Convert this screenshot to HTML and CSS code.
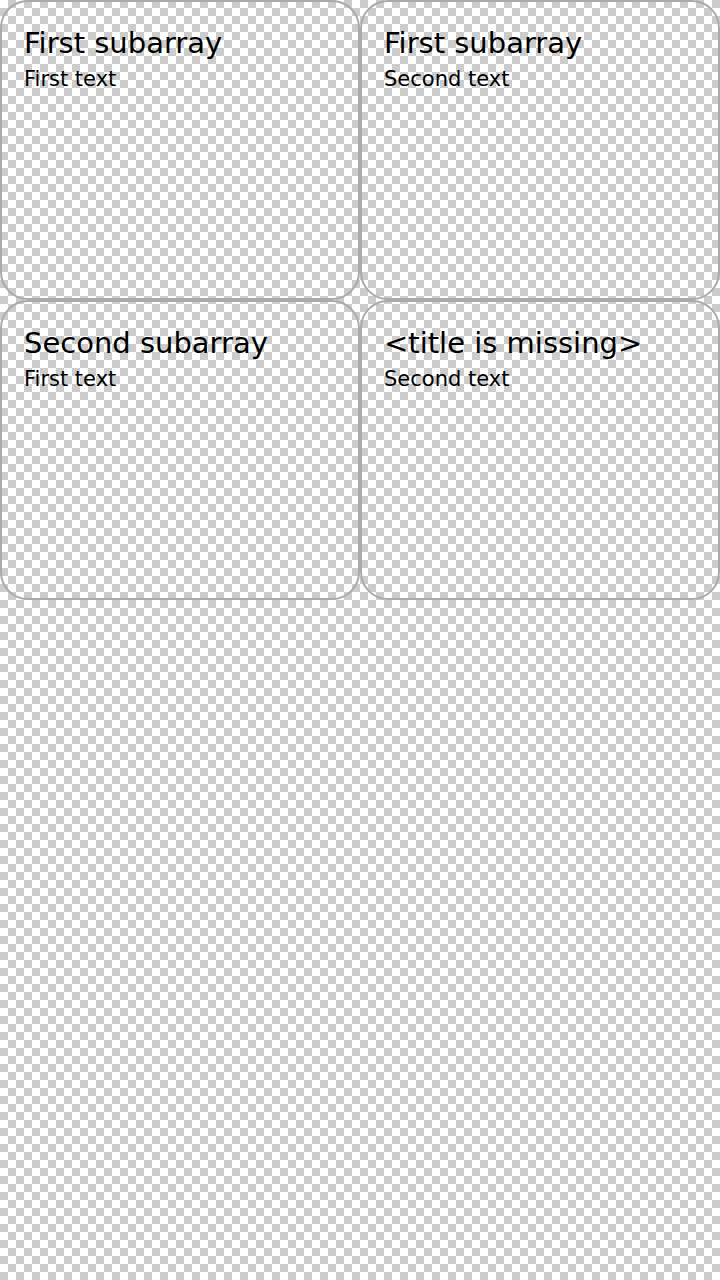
FILE: index.html
```html
<!DOCTYPE html>
<html>
<head>
<meta charset="utf-8">
<link rel="stylesheet" href="styles.css">
</head>
<body>
<div class="grid">
  <div class="card">
    <div class="title">First subarray</div>
    <div class="text">First text</div>
  </div>
  <div class="card">
    <div class="title">First subarray</div>
    <div class="text">Second text</div>
  </div>
  <div class="card">
    <div class="title">Second subarray</div>
    <div class="text">First text</div>
  </div>
  <div class="card">
    <div class="title">&lt;title is missing&gt;</div>
    <div class="text">Second text</div>
  </div>
</div>
</body>
</html>
```
FILE: styles.css
```css
html, body {
  margin: 0;
  padding: 0;
  width: 720px;
  height: 1280px;
}
body {
  background: repeating-conic-gradient(#cccccc 0 25%, #ffffff 0 50%) 0 0 / 16px 16px;
  font-family: "DejaVu Sans", sans-serif;
  color: #000;
}
.grid {
  display: grid;
  grid-template-columns: 360px 360px;
  grid-auto-rows: 300px;
}
.card {
  box-sizing: border-box;
  border: 2px solid #aaaaaa;
  border-radius: 28px;
  padding: 23px 20px 23px 22px;
}
.title {
  font-size: 29px;
  line-height: 36px;
}
.text {
  font-size: 21px;
  line-height: 28px;
  margin-top: 4px;
}
```
